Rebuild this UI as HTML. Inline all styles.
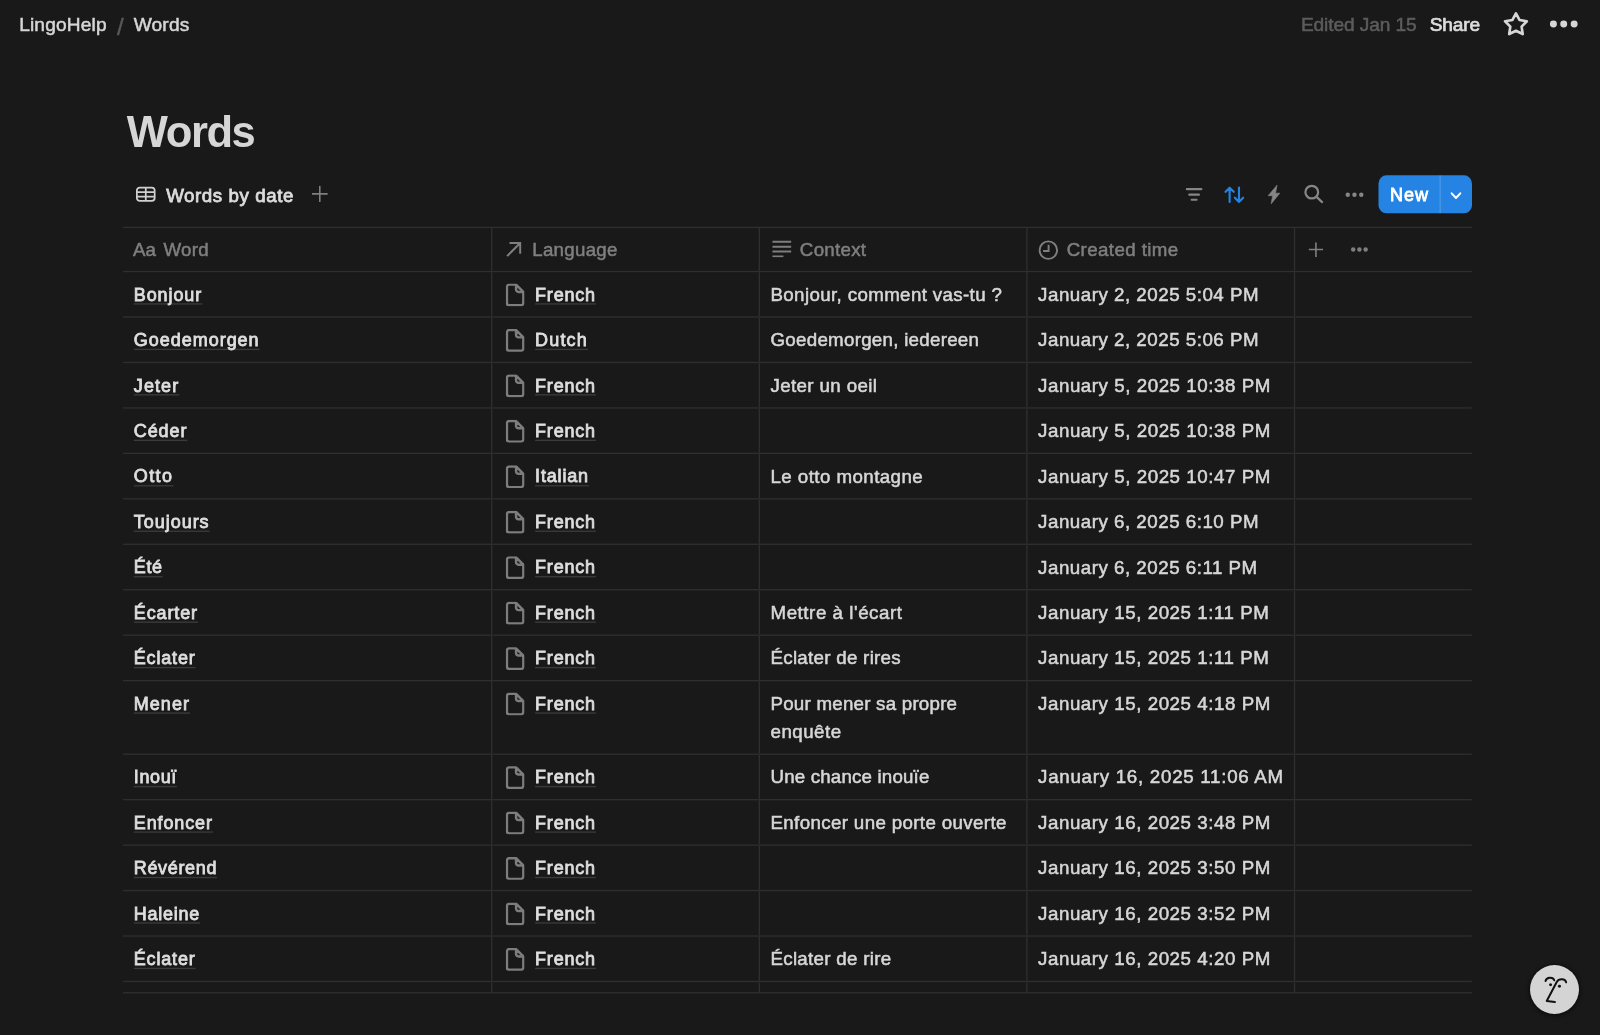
<!DOCTYPE html>
<html lang="en">
<head>
<meta charset="utf-8">
<title>Words</title>
<style>
  html,body{margin:0;padding:0;background:#191919;}
  body{width:1600px;height:1035px;overflow:hidden;position:relative;
       font-family:"Liberation Sans",sans-serif;color:#d4d4d4;-webkit-font-smoothing:antialiased;}
  #app{position:absolute;left:0;top:0;width:1196px;height:774px;transform-origin:0 0;transform:scale(1.338,1.337);will-change:transform;
       font-size:14px;line-height:21px;}
  /* top bar */
  .topbar{position:absolute;left:0;top:0;width:1196px;height:36px;}
  .crumbs{position:absolute;left:14.3px;top:7.5px;height:21px;display:flex;align-items:center;white-space:nowrap;color:#d6d6d6;font-size:14.3px;letter-spacing:.13px;-webkit-text-stroke:.4px #d6d6d6;transform:translateY(.15px)}
  .crumbs .sep{color:#5a5a5a;-webkit-text-stroke:.3px #5a5a5a;font-size:18px;margin:0 7.45px 0 7.6px;letter-spacing:0;transform:translateY(2px)}
  .actions{position:absolute;right:0;top:0;height:36px;}
  .edited{position:absolute;left:972.3px;top:7.5px;color:#5c5c5c;font-size:14.3px;-webkit-text-stroke:.4px #5c5c5c;white-space:nowrap;letter-spacing:-.08px;transform:translateY(.1px)}
  .share{position:absolute;left:1068.6px;top:7.5px;color:#dcdcdc;font-size:14.3px;-webkit-text-stroke:.55px #dcdcdc;white-space:nowrap;letter-spacing:-.15px;transform:translateY(.1px)}
  .star{position:absolute;left:1121.9px;top:7.6px;transform:translateY(-.45px)}
  .more{position:absolute;left:1157px;top:14px}
  /* title */
  h1{position:absolute;left:94.8px;top:79px;margin:0;font-size:33.2px;line-height:40px;font-weight:700;color:#d6d6d6;letter-spacing:-1.1px;white-space:nowrap;transform-origin:0 0;transform:translate(-.2px,.1px) scaleX(.981)}
  /* view bar */
  .viewbar{position:absolute;left:92px;top:131px;width:1008px;height:29px}
  .tabicon{position:absolute;left:8.6px;top:8.4px}
  .tabname{position:absolute;left:32.2px;top:4px;transform:translateY(.9px);color:#dcdcdc;-webkit-text-stroke:.6px #dcdcdc;white-space:nowrap;letter-spacing:.42px}
  .addview{position:absolute;left:141px;top:8.1px}
  .tool{position:absolute;top:0}
  .newbtn{position:absolute;left:938px;top:0;width:70px;height:28px;transform-origin:0 0;transform:translate(.27px,.12px) scale(.9983,1.0143);border-radius:6px;background:#2583e3;color:#fff}
  .newbtn .lbl{position:absolute;left:8.6px;top:3.9px;-webkit-text-stroke:.6px #fff;letter-spacing:.75px;font-size:13.5px;transform:translateY(.1px)}
  .newbtn .div{position:absolute;left:46px;top:0;width:1px;height:28px;transform:translateX(-.35px);background:rgba(255,255,255,.17)}
  .newbtn svg{position:absolute;left:52.7px;top:11.3px}
  /* table */
  .table{position:absolute;left:92px;top:170px;width:1008px;transform:translateY(-.41px)}
  .hrow{display:flex;height:32px;border-top:1px solid #2f2f2f;border-bottom:1px solid #2f2f2f;color:#7f7f7f}
  .row{display:flex;height:33px;border-bottom:1px solid #2f2f2f}
  .row.two{height:54px}
  .tail{display:flex;height:7px;transform:translateY(.45px);border-bottom:1px solid #2f2f2f}
  .cell{box-sizing:border-box;border-right:1px solid #2f2f2f;position:relative;flex:none;white-space:nowrap}
  .c1{width:276px}.c2,.c3,.c4{width:200px}.c5{width:132px;border-right:none}
  .hrow .cell{display:flex;align-items:center;padding-left:7.4px;letter-spacing:.2px;-webkit-text-stroke:.38px #7f7f7f}
  .row .cell{padding:6px 8px 0 8px}
  .ttl{display:inline-block;transform:translateY(.25px);color:#dedede;-webkit-text-stroke:.62px #dedede;letter-spacing:.4px;font-size:13.45px;text-decoration:underline;text-decoration-color:#3b3b3b;text-decoration-thickness:1px;text-underline-offset:2.4px;text-decoration-skip-ink:none}
  .txt{display:inline-block;transform:translate(-.15px,.37px);color:#d7d7d7;-webkit-text-stroke:.4px #d7d7d7;letter-spacing:.18px}
  .tm{letter-spacing:.36px}
  .pg{position:absolute;left:9.9px;top:8.75px;transform:translateY(-.55px)}
  .c2 .ttl{margin-left:23.9px}
  .fab{position:absolute;left:1140px;top:718px;width:46px;height:46px}.fab svg{display:block}
</style>
</head>
<body>
<div id="app">
  <header class="topbar">
    <nav class="crumbs"><span>LingoHelp</span><span class="sep">/</span><span>Words</span></nav>
    <span class="edited">Edited Jan 15</span>
    <span class="share">Share</span>
    <svg class="star" width="22" height="22" viewBox="-11 -11 22 22"><path d="M0.00 -8.55L2.62 -3.60L8.13 -2.64L4.23 1.38L5.03 6.92L0.00 4.45L-5.03 6.92L-4.23 1.38L-8.13 -2.64L-2.62 -3.60Z" fill="none" stroke="#d6d6d6" stroke-width="2" stroke-linejoin="round"/></svg>
    <svg class="more" width="24" height="8" viewBox="0 0 24 8"><circle cx="4" cy="4" r="2.6" fill="#d6d6d6"/><circle cx="11.7" cy="4" r="2.6" fill="#d6d6d6"/><circle cx="19.5" cy="4" r="2.6" fill="#d6d6d6"/></svg>
  </header>
  <main>
    <h1>Words</h1>
    <section class="viewbar">
      <svg class="tabicon" width="16" height="13" viewBox="0 0 16 13"><rect x="1.3" y="1.3" width="13.3" height="10" rx="2.2" fill="none" stroke="#d0d0d0" stroke-width="1.3"/><path d="M1.3 4.75h13.3M1.3 8.1h13.3M7.95 1.3v10" stroke="#d0d0d0" stroke-width="1.3" fill="none"/></svg>
      <span class="tabname">Words by date</span>
      <svg class="addview" width="12" height="12" viewBox="0 0 12 12"><path d="M6 0v12M0 6h12" stroke="#7f7f7f" stroke-width="1.2"/></svg>
      <svg class="tool" style="left:793px;top:9px" width="15" height="11" viewBox="0 0 15 11"><path d="M2.05 1.5H12.85M3.85 5.6H11.05M5.65 9.4H9.25" stroke="#868686" stroke-width="1.65" stroke-linecap="round"/></svg>
      <svg class="tool" style="left:822px;top:8px" width="17" height="14" viewBox="0 0 17 14"><path d="M5 12.1V1.4M2 4.5L5 1.4l3.1 3.1M12 1.3v10.7M8.9 8.9l3.1 3.1 3.1-3.1" stroke="#2383e2" stroke-width="1.6" fill="none" stroke-linecap="round" stroke-linejoin="round"/></svg>
      <svg class="tool" style="left:855px;top:7px" width="11" height="15" viewBox="0 0 11 15"><path d="M7.45 .5L.8 8.35h3.3L3.1 14.4 9.5 6.5H6.3z" fill="#868686" stroke="#868686" stroke-width=".5" stroke-linejoin="round"/></svg>
      <svg class="tool" style="left:882px;top:6px" width="17" height="17" viewBox="0 0 17 17"><circle cx="6.4" cy="6.7" r="4.75" fill="none" stroke="#868686" stroke-width="1.65"/><path d="M10 10.3l4.1 3.85" stroke="#868686" stroke-width="1.7" stroke-linecap="round"/></svg>
      <svg class="tool" style="left:912.5px;top:12.5px;transform:translateY(-.35px)" width="15" height="4" viewBox="0 0 15 4"><circle cx="2.3" cy="2" r="1.65" fill="#868686"/><circle cx="7.3" cy="2" r="1.65" fill="#868686"/><circle cx="12.4" cy="2" r="1.65" fill="#868686"/></svg>
      <div class="newbtn"><span class="lbl">New</span><span class="div"></span>
        <svg width="10" height="7" viewBox="0 0 10 7"><path d="M1.75 2.3l3.25 3.4 3.25-3.4" fill="none" stroke="#fff" stroke-width="1.5" stroke-linecap="round" stroke-linejoin="round"/></svg></div>
    </section>
    <section class="table">
      <div class="hrow">
        <div class="cell c1"><span style="margin-right:5.6px;letter-spacing:0">Aa</span><span>Word</span></div>
        <div class="cell c2"><svg style="margin:0 7.7px 0 2.7px" width="12" height="12" viewBox="0 0 12 12"><path d="M1 11L10.6 1.4M2.8 1.2h8v8" fill="none" stroke="#7f7f7f" stroke-width="1.5"/></svg><span>Language</span></div>
        <div class="cell c3"><svg style="margin:0 5.9px 0 1.5px;transform:translateY(-1.1px)" width="15" height="13" viewBox="0 0 15 13"><path d="M.3 1.4h14M.3 5.1h14M.3 8.7h14M.3 12.3h8.2" stroke="#7f7f7f" stroke-width="1.5"/></svg><span>Context</span></div>
        <div class="cell c4"><svg style="margin:0 5.8px 0 1px" width="15" height="15" viewBox="0 0 15 15"><circle cx="7.5" cy="7.5" r="6.55" fill="none" stroke="#7f7f7f" stroke-width="1.45"/><path d="M7.7 3.4v4.8H3.6" fill="none" stroke="#7f7f7f" stroke-width="1.45"/></svg><span style="letter-spacing:.3px">Created time</span></div>
        <div class="cell c5"><svg style="margin-left:3.1px;transform:translateY(-.45px)" width="11" height="11" viewBox="0 0 11 11"><path d="M5.5 0v11M0 5.5h11" stroke="#7f7f7f" stroke-width="1.2"/></svg><svg style="margin-left:20px;transform:translateX(.3px)" width="14" height="4" viewBox="0 0 14 4"><circle cx="2.05" cy="2" r="1.65" fill="#7f7f7f"/><circle cx="6.7" cy="2" r="1.65" fill="#7f7f7f"/><circle cx="11.35" cy="2" r="1.65" fill="#7f7f7f"/></svg></div>
      </div>
      <div class="row">
        <div class="cell c1"><span class="ttl" id="w0" style="letter-spacing:0.685px">Bonjour</span></div>
        <div class="cell c2"><svg class="pg" viewBox="0 0 14 17" width="14" height="17"><path d="M2.6 .85h5.1l5.45 5.45v8.25a1.75 1.75 0 0 1-1.75 1.75H2.6a1.75 1.75 0 0 1-1.75-1.75V2.6A1.75 1.75 0 0 1 2.6 .85z M7.7 .85v3.7a1.75 1.75 0 0 0 1.75 1.75h3.7" fill="none" stroke="#7d7d7d" stroke-width="1.85" stroke-linejoin="round"/></svg><span class="ttl" id="l0" style="letter-spacing:0.607px">French</span></div>
        <div class="cell c3"><span class="txt" id="c0_0" style="letter-spacing:0.269px">Bonjour, comment vas-tu ?</span></div>
        <div class="cell c4"><span class="txt" id="t0" style="letter-spacing:0.38px">January 2, 2025 5:04 PM</span></div>
        <div class="cell c5"></div>
      </div>
      <div class="row">
        <div class="cell c1"><span class="ttl" id="w1" style="letter-spacing:0.737px">Goedemorgen</span></div>
        <div class="cell c2"><svg class="pg" viewBox="0 0 14 17" width="14" height="17"><path d="M2.6 .85h5.1l5.45 5.45v8.25a1.75 1.75 0 0 1-1.75 1.75H2.6a1.75 1.75 0 0 1-1.75-1.75V2.6A1.75 1.75 0 0 1 2.6 .85z M7.7 .85v3.7a1.75 1.75 0 0 0 1.75 1.75h3.7" fill="none" stroke="#7d7d7d" stroke-width="1.85" stroke-linejoin="round"/></svg><span class="ttl" id="l1" style="letter-spacing:0.892px">Dutch</span></div>
        <div class="cell c3"><span class="txt" id="c1_0" style="letter-spacing:0.201px">Goedemorgen, iedereen</span></div>
        <div class="cell c4"><span class="txt" id="t1" style="letter-spacing:0.38px">January 2, 2025 5:06 PM</span></div>
        <div class="cell c5"></div>
      </div>
      <div class="row">
        <div class="cell c1"><span class="ttl" id="w2" style="letter-spacing:0.825px">Jeter</span></div>
        <div class="cell c2"><svg class="pg" viewBox="0 0 14 17" width="14" height="17"><path d="M2.6 .85h5.1l5.45 5.45v8.25a1.75 1.75 0 0 1-1.75 1.75H2.6a1.75 1.75 0 0 1-1.75-1.75V2.6A1.75 1.75 0 0 1 2.6 .85z M7.7 .85v3.7a1.75 1.75 0 0 0 1.75 1.75h3.7" fill="none" stroke="#7d7d7d" stroke-width="1.85" stroke-linejoin="round"/></svg><span class="ttl" id="l2" style="letter-spacing:0.607px">French</span></div>
        <div class="cell c3"><span class="txt" id="c2_0" style="letter-spacing:0.275px">Jeter un oeil</span></div>
        <div class="cell c4"><span class="txt" id="t2" style="letter-spacing:0.405px">January 5, 2025 10:38 PM</span></div>
        <div class="cell c5"></div>
      </div>
      <div class="row">
        <div class="cell c1"><span class="ttl" id="w3" style="letter-spacing:0.676px">Céder</span></div>
        <div class="cell c2"><svg class="pg" viewBox="0 0 14 17" width="14" height="17"><path d="M2.6 .85h5.1l5.45 5.45v8.25a1.75 1.75 0 0 1-1.75 1.75H2.6a1.75 1.75 0 0 1-1.75-1.75V2.6A1.75 1.75 0 0 1 2.6 .85z M7.7 .85v3.7a1.75 1.75 0 0 0 1.75 1.75h3.7" fill="none" stroke="#7d7d7d" stroke-width="1.85" stroke-linejoin="round"/></svg><span class="ttl" id="l3" style="letter-spacing:0.607px">French</span></div>
        <div class="cell c3"></div>
        <div class="cell c4"><span class="txt" id="t3" style="letter-spacing:0.405px">January 5, 2025 10:38 PM</span></div>
        <div class="cell c5"></div>
      </div>
      <div class="row">
        <div class="cell c1"><span class="ttl" id="w4" style="letter-spacing:1.03px">Otto</span></div>
        <div class="cell c2"><svg class="pg" viewBox="0 0 14 17" width="14" height="17"><path d="M2.6 .85h5.1l5.45 5.45v8.25a1.75 1.75 0 0 1-1.75 1.75H2.6a1.75 1.75 0 0 1-1.75-1.75V2.6A1.75 1.75 0 0 1 2.6 .85z M7.7 .85v3.7a1.75 1.75 0 0 0 1.75 1.75h3.7" fill="none" stroke="#7d7d7d" stroke-width="1.85" stroke-linejoin="round"/></svg><span class="ttl" id="l4" style="letter-spacing:0.626px">Italian</span></div>
        <div class="cell c3"><span class="txt" id="c4_0" style="letter-spacing:0.32px">Le otto montagne</span></div>
        <div class="cell c4"><span class="txt" id="t4" style="letter-spacing:0.405px">January 5, 2025 10:47 PM</span></div>
        <div class="cell c5"></div>
      </div>
      <div class="row">
        <div class="cell c1"><span class="ttl" id="w5" style="letter-spacing:0.731px">Toujours</span></div>
        <div class="cell c2"><svg class="pg" viewBox="0 0 14 17" width="14" height="17"><path d="M2.6 .85h5.1l5.45 5.45v8.25a1.75 1.75 0 0 1-1.75 1.75H2.6a1.75 1.75 0 0 1-1.75-1.75V2.6A1.75 1.75 0 0 1 2.6 .85z M7.7 .85v3.7a1.75 1.75 0 0 0 1.75 1.75h3.7" fill="none" stroke="#7d7d7d" stroke-width="1.85" stroke-linejoin="round"/></svg><span class="ttl" id="l5" style="letter-spacing:0.607px">French</span></div>
        <div class="cell c3"></div>
        <div class="cell c4"><span class="txt" id="t5" style="letter-spacing:0.38px">January 6, 2025 6:10 PM</span></div>
        <div class="cell c5"></div>
      </div>
      <div class="row">
        <div class="cell c1"><span class="ttl" id="w6" style="letter-spacing:0.474px">Été</span></div>
        <div class="cell c2"><svg class="pg" viewBox="0 0 14 17" width="14" height="17"><path d="M2.6 .85h5.1l5.45 5.45v8.25a1.75 1.75 0 0 1-1.75 1.75H2.6a1.75 1.75 0 0 1-1.75-1.75V2.6A1.75 1.75 0 0 1 2.6 .85z M7.7 .85v3.7a1.75 1.75 0 0 0 1.75 1.75h3.7" fill="none" stroke="#7d7d7d" stroke-width="1.85" stroke-linejoin="round"/></svg><span class="ttl" id="l6" style="letter-spacing:0.607px">French</span></div>
        <div class="cell c3"></div>
        <div class="cell c4"><span class="txt" id="t6" style="letter-spacing:0.38px">January 6, 2025 6:11 PM</span></div>
        <div class="cell c5"></div>
      </div>
      <div class="row">
        <div class="cell c1"><span class="ttl" id="w7" style="letter-spacing:0.666px">Écarter</span></div>
        <div class="cell c2"><svg class="pg" viewBox="0 0 14 17" width="14" height="17"><path d="M2.6 .85h5.1l5.45 5.45v8.25a1.75 1.75 0 0 1-1.75 1.75H2.6a1.75 1.75 0 0 1-1.75-1.75V2.6A1.75 1.75 0 0 1 2.6 .85z M7.7 .85v3.7a1.75 1.75 0 0 0 1.75 1.75h3.7" fill="none" stroke="#7d7d7d" stroke-width="1.85" stroke-linejoin="round"/></svg><span class="ttl" id="l7" style="letter-spacing:0.607px">French</span></div>
        <div class="cell c3"><span class="txt" id="c7_0" style="letter-spacing:0.409px">Mettre à l'écart</span></div>
        <div class="cell c4"><span class="txt" id="t7" style="letter-spacing:0.405px">January 15, 2025 1:11 PM</span></div>
        <div class="cell c5"></div>
      </div>
      <div class="row">
        <div class="cell c1"><span class="ttl" id="w8" style="letter-spacing:0.622px">Éclater</span></div>
        <div class="cell c2"><svg class="pg" viewBox="0 0 14 17" width="14" height="17"><path d="M2.6 .85h5.1l5.45 5.45v8.25a1.75 1.75 0 0 1-1.75 1.75H2.6a1.75 1.75 0 0 1-1.75-1.75V2.6A1.75 1.75 0 0 1 2.6 .85z M7.7 .85v3.7a1.75 1.75 0 0 0 1.75 1.75h3.7" fill="none" stroke="#7d7d7d" stroke-width="1.85" stroke-linejoin="round"/></svg><span class="ttl" id="l8" style="letter-spacing:0.607px">French</span></div>
        <div class="cell c3"><span class="txt" id="c8_0" style="letter-spacing:0.21px">Éclater de rires</span></div>
        <div class="cell c4"><span class="txt" id="t8" style="letter-spacing:0.405px">January 15, 2025 1:11 PM</span></div>
        <div class="cell c5"></div>
      </div>
      <div class="row two">
        <div class="cell c1"><span class="ttl" id="w9" style="letter-spacing:0.783px">Mener</span></div>
        <div class="cell c2"><svg class="pg" viewBox="0 0 14 17" width="14" height="17"><path d="M2.6 .85h5.1l5.45 5.45v8.25a1.75 1.75 0 0 1-1.75 1.75H2.6a1.75 1.75 0 0 1-1.75-1.75V2.6A1.75 1.75 0 0 1 2.6 .85z M7.7 .85v3.7a1.75 1.75 0 0 0 1.75 1.75h3.7" fill="none" stroke="#7d7d7d" stroke-width="1.85" stroke-linejoin="round"/></svg><span class="ttl" id="l9" style="letter-spacing:0.607px">French</span></div>
        <div class="cell c3"><span class="txt" id="c9_0" style="letter-spacing:0.171px">Pour mener sa propre</span><br><span class="txt" id="c9_1" style="letter-spacing:0.362px">enquête</span></div>
        <div class="cell c4"><span class="txt" id="t9" style="letter-spacing:0.405px">January 15, 2025 4:18 PM</span></div>
        <div class="cell c5"></div>
      </div>
      <div class="row">
        <div class="cell c1"><span class="ttl" id="w10" style="letter-spacing:0.464px">Inouï</span></div>
        <div class="cell c2"><svg class="pg" viewBox="0 0 14 17" width="14" height="17"><path d="M2.6 .85h5.1l5.45 5.45v8.25a1.75 1.75 0 0 1-1.75 1.75H2.6a1.75 1.75 0 0 1-1.75-1.75V2.6A1.75 1.75 0 0 1 2.6 .85z M7.7 .85v3.7a1.75 1.75 0 0 0 1.75 1.75h3.7" fill="none" stroke="#7d7d7d" stroke-width="1.85" stroke-linejoin="round"/></svg><span class="ttl" id="l10" style="letter-spacing:0.607px">French</span></div>
        <div class="cell c3"><span class="txt" id="c10_0" style="letter-spacing:0.124px">Une chance inouïe</span></div>
        <div class="cell c4"><span class="txt" id="t10" style="letter-spacing:0.541px">January 16, 2025 11:06 AM</span></div>
        <div class="cell c5"></div>
      </div>
      <div class="row">
        <div class="cell c1"><span class="ttl" id="w11" style="letter-spacing:0.666px">Enfoncer</span></div>
        <div class="cell c2"><svg class="pg" viewBox="0 0 14 17" width="14" height="17"><path d="M2.6 .85h5.1l5.45 5.45v8.25a1.75 1.75 0 0 1-1.75 1.75H2.6a1.75 1.75 0 0 1-1.75-1.75V2.6A1.75 1.75 0 0 1 2.6 .85z M7.7 .85v3.7a1.75 1.75 0 0 0 1.75 1.75h3.7" fill="none" stroke="#7d7d7d" stroke-width="1.85" stroke-linejoin="round"/></svg><span class="ttl" id="l11" style="letter-spacing:0.607px">French</span></div>
        <div class="cell c3"><span class="txt" id="c11_0" style="letter-spacing:0.265px">Enfoncer une porte ouverte</span></div>
        <div class="cell c4"><span class="txt" id="t11" style="letter-spacing:0.405px">January 16, 2025 3:48 PM</span></div>
        <div class="cell c5"></div>
      </div>
      <div class="row">
        <div class="cell c1"><span class="ttl" id="w12" style="letter-spacing:0.499px">Révérend</span></div>
        <div class="cell c2"><svg class="pg" viewBox="0 0 14 17" width="14" height="17"><path d="M2.6 .85h5.1l5.45 5.45v8.25a1.75 1.75 0 0 1-1.75 1.75H2.6a1.75 1.75 0 0 1-1.75-1.75V2.6A1.75 1.75 0 0 1 2.6 .85z M7.7 .85v3.7a1.75 1.75 0 0 0 1.75 1.75h3.7" fill="none" stroke="#7d7d7d" stroke-width="1.85" stroke-linejoin="round"/></svg><span class="ttl" id="l12" style="letter-spacing:0.607px">French</span></div>
        <div class="cell c3"></div>
        <div class="cell c4"><span class="txt" id="t12" style="letter-spacing:0.405px">January 16, 2025 3:50 PM</span></div>
        <div class="cell c5"></div>
      </div>
      <div class="row">
        <div class="cell c1"><span class="ttl" id="w13" style="letter-spacing:0.558px">Haleine</span></div>
        <div class="cell c2"><svg class="pg" viewBox="0 0 14 17" width="14" height="17"><path d="M2.6 .85h5.1l5.45 5.45v8.25a1.75 1.75 0 0 1-1.75 1.75H2.6a1.75 1.75 0 0 1-1.75-1.75V2.6A1.75 1.75 0 0 1 2.6 .85z M7.7 .85v3.7a1.75 1.75 0 0 0 1.75 1.75h3.7" fill="none" stroke="#7d7d7d" stroke-width="1.85" stroke-linejoin="round"/></svg><span class="ttl" id="l13" style="letter-spacing:0.607px">French</span></div>
        <div class="cell c3"></div>
        <div class="cell c4"><span class="txt" id="t13" style="letter-spacing:0.405px">January 16, 2025 3:52 PM</span></div>
        <div class="cell c5"></div>
      </div>
      <div class="row">
        <div class="cell c1"><span class="ttl" id="w14" style="letter-spacing:0.622px">Éclater</span></div>
        <div class="cell c2"><svg class="pg" viewBox="0 0 14 17" width="14" height="17"><path d="M2.6 .85h5.1l5.45 5.45v8.25a1.75 1.75 0 0 1-1.75 1.75H2.6a1.75 1.75 0 0 1-1.75-1.75V2.6A1.75 1.75 0 0 1 2.6 .85z M7.7 .85v3.7a1.75 1.75 0 0 0 1.75 1.75h3.7" fill="none" stroke="#7d7d7d" stroke-width="1.85" stroke-linejoin="round"/></svg><span class="ttl" id="l14" style="letter-spacing:0.607px">French</span></div>
        <div class="cell c3"><span class="txt" id="c14_0" style="letter-spacing:0.213px">Éclater de rire</span></div>
        <div class="cell c4"><span class="txt" id="t14" style="letter-spacing:0.405px">January 16, 2025 4:20 PM</span></div>
        <div class="cell c5"></div>
      </div>
      <div class="tail"><div class="cell c1"></div><div class="cell c2"></div><div class="cell c3"></div><div class="cell c4"></div><div class="cell c5"></div></div>
    </section>
  </main>
  <div class="fab">
    <svg width="46" height="46" viewBox="0 0 46 46"><defs><filter id="fsh" x="-30%" y="-30%" width="160%" height="160%"><feGaussianBlur stdDeviation="1.5"/></filter></defs><circle cx="21.81" cy="22.5" r="18.9" fill="#000" opacity=".6" filter="url(#fsh)"/><circle cx="21.81" cy="22.09" r="18.31" fill="#d4d4d4"/><path d="M15.1 15.75C15.8 12.8 20.7 12.55 21.6 15.2M30.5 16.75C29.9 13.7 24.97 13.8 23.57 16.26L15.99 30.68l6.07.76" fill="none" stroke="#111" stroke-width="1.5" stroke-linecap="round" stroke-linejoin="round"/><circle cx="18.87" cy="18.54" r="1.12" fill="#111"/><circle cx="25.49" cy="19.66" r="1.12" fill="#111"/></svg>
  </div>
</div>
</body>
</html>
